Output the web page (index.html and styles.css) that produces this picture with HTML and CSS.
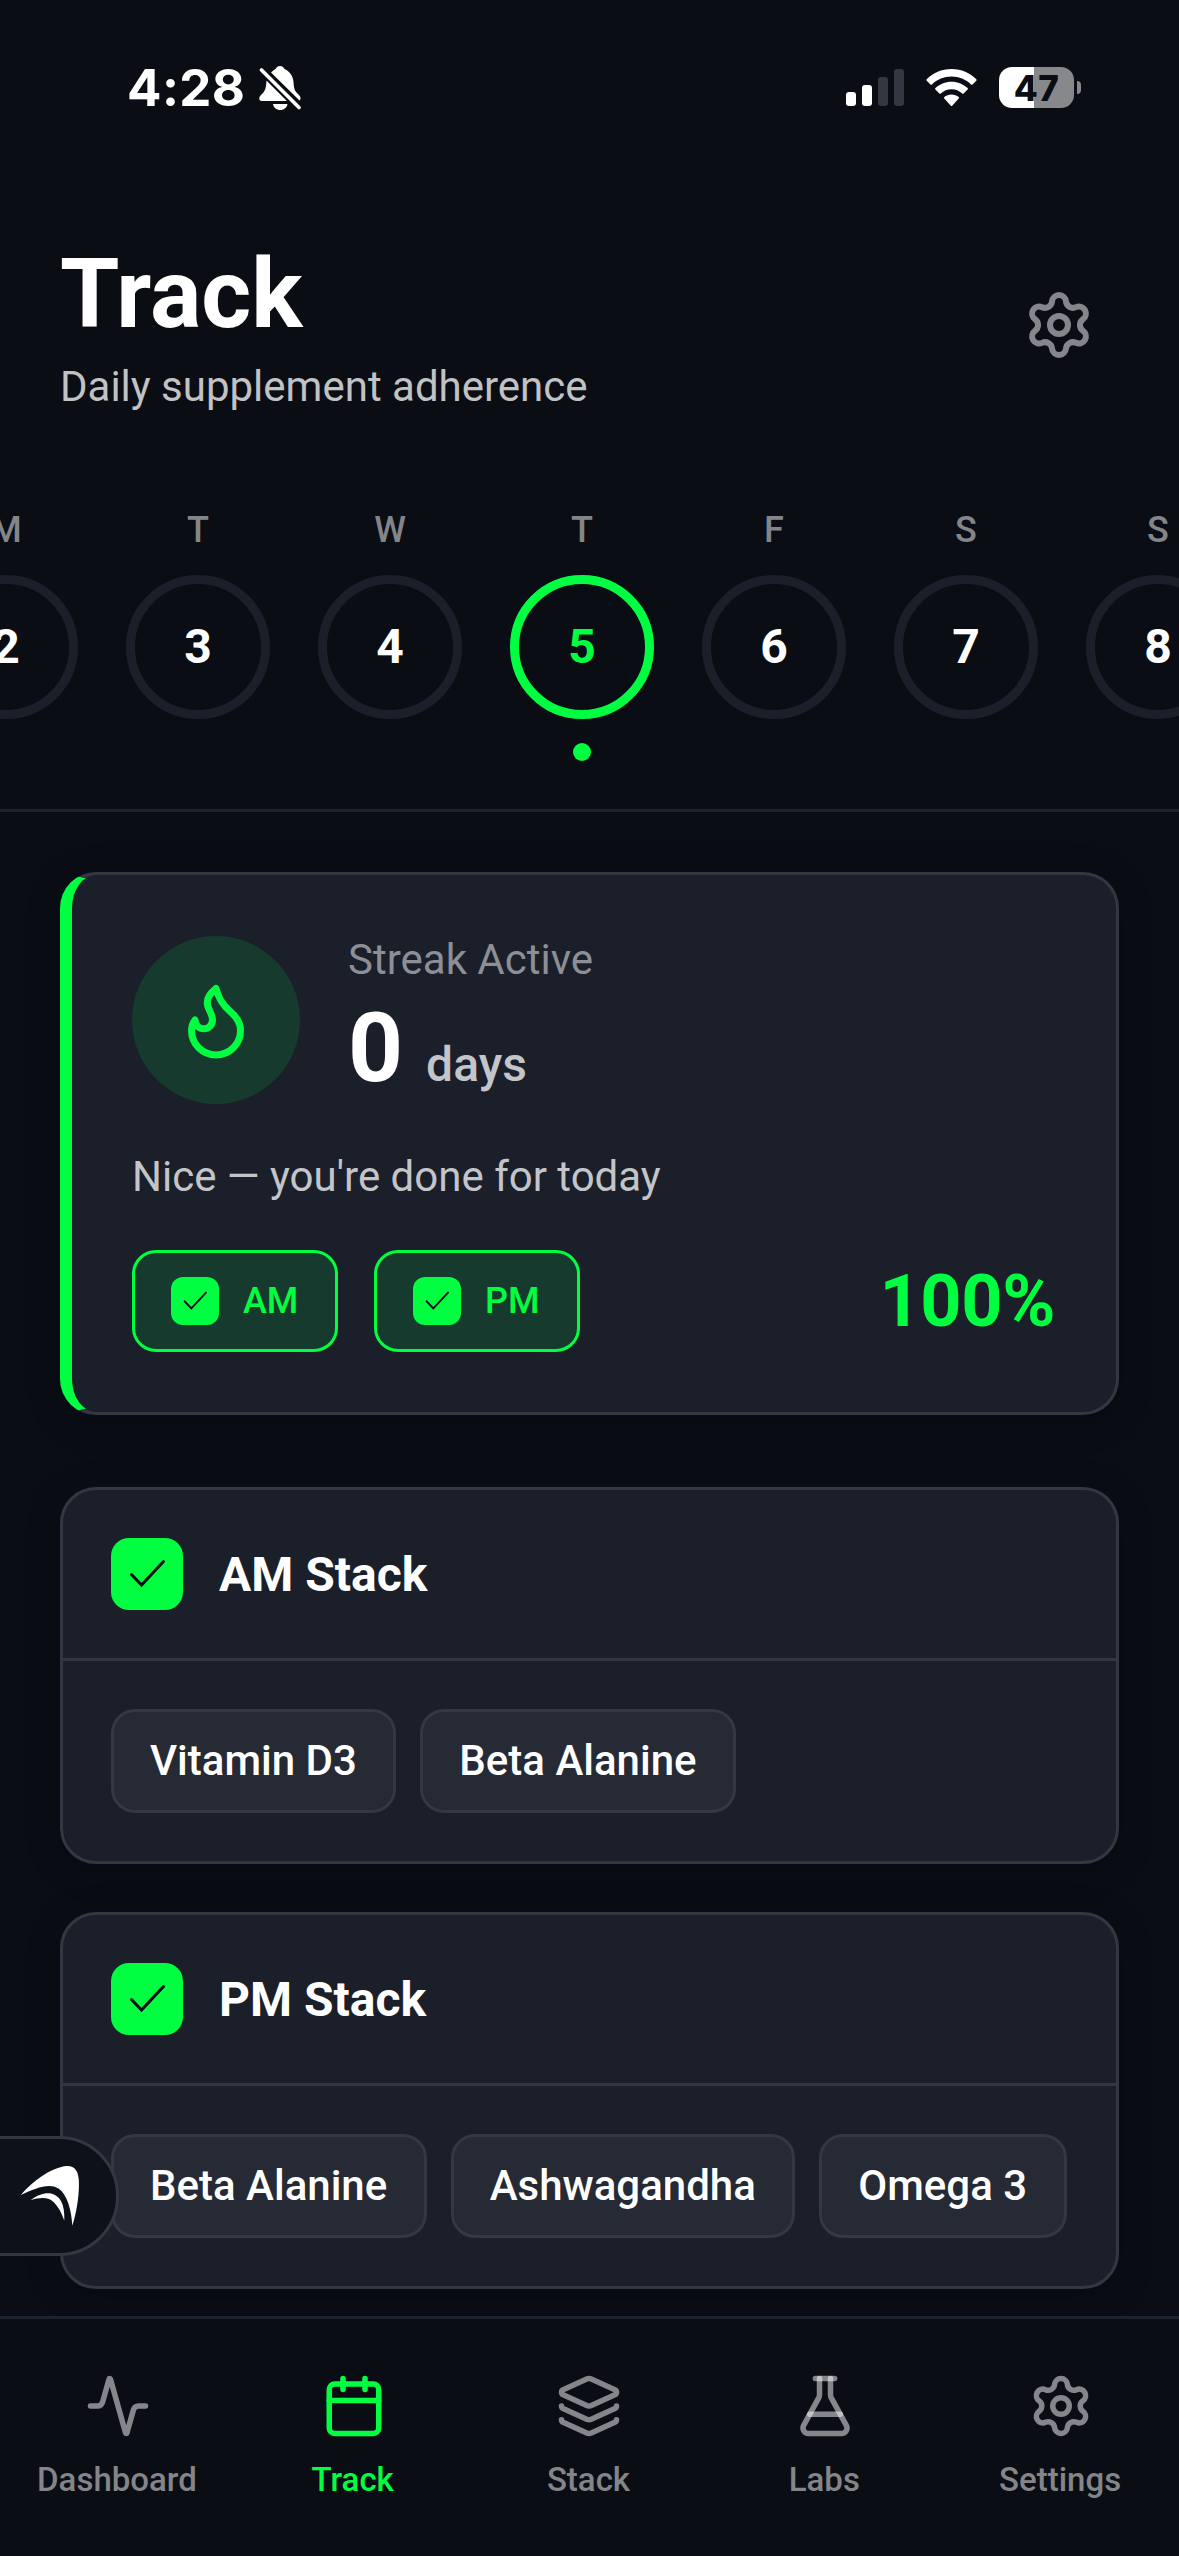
FILE: index.html
```html
<!DOCTYPE html>
<html lang="en">
<head>
<meta charset="utf-8">
<title>Track</title>
<link rel="stylesheet" href="styles.css">
</head>
<body>
<svg class="defs" width="0" height="0">
  <symbol id="gear" viewBox="0 0 24 24">
    <path d="M9.671 4.136a2.34 2.34 0 0 1 4.659 0 2.34 2.34 0 0 0 3.319 1.915 2.34 2.34 0 0 1 2.33 4.033 2.34 2.34 0 0 0 0 3.831 2.34 2.34 0 0 1-2.33 4.033 2.34 2.34 0 0 0-3.319 1.915 2.34 2.34 0 0 1-4.659 0 2.34 2.34 0 0 0-3.32-1.915 2.34 2.34 0 0 1-2.33-4.033 2.34 2.34 0 0 0 0-3.831A2.34 2.34 0 0 1 6.35 6.051a2.34 2.34 0 0 0 3.319-1.915"/>
    <circle cx="12" cy="12" r="3"/>
  </symbol>
  <symbol id="check" viewBox="0 0 72 72">
    <path d="M20.500 36.500L30.500 47L52.500 23.500"/>
  </symbol>
</svg>
<div class="screen">
  <div class="status">
    <div class="status-left">
      <span class="time">4:28</span>
      <svg class="bell" viewBox="0 0 42 44">
        <path fill="#fff" d="M12 6.500C14 4.500 15.500 3.500 16.500 3C17.500 1 19 0 21 0S24.500 1 25.500 3C31 5.500 34 10 34.500 16C35 23 35.500 25 40 29C42 31 42 33.500 40.500 34.500Z"/>
        <path fill="#fff" d="M7.500 14.500L28 35H2.500C0 35 -0.500 31.500 1.500 29.500C6 25.500 7 23 7.500 14.500Z"/>
        <path fill="#fff" d="M14 38H28.500C28 41.500 25 44 21.200 44S14.500 41.500 14 38Z"/>
        <path stroke="#0a0d14" stroke-width="8" d="M4 5L44 45"/>
        <path stroke="#fff" stroke-width="3.600" stroke-linecap="round" d="M2.500 4L40 41.500"/>
      </svg>
    </div>
    <div class="status-right">
      <div class="signal"><i class="bar b1"></i><i class="bar b2"></i><i class="bar b3 dim"></i><i class="bar b4 dim"></i></div>
      <svg class="wifi" viewBox="0 0 51 38">
        <path fill="#fff" d="M25.500 0C35.500 0 44 4 50.300 10.200Q51 11 50.300 11.700L46.500 15.500Q45.800 16 45 15.400C39.800 10.300 33 7.500 25.500 7.500S11.200 10.300 6 15.400Q5.200 16 4.500 15.500L0.700 11.700Q0 11 0.700 10.200C7 4 15.500 0 25.500 0Z"/>
        <path fill="#fff" d="M25.500 12.700C31.800 12.700 37.500 15.200 41.600 19.100Q42.300 19.900 41.600 20.600L37.600 24.500Q36.900 25 36.200 24.400C33.300 21.800 29.600 20.200 25.500 20.200S17.700 21.800 14.800 24.400Q14.100 25 13.400 24.500L9.400 20.600Q8.700 19.900 9.400 19.100C13.500 15.200 19.200 12.700 25.500 12.700Z"/>
        <path fill="#fff" d="M25.500 25.500C28.300 25.500 30.800 26.500 32.700 28.100Q33.400 28.800 32.700 29.600L26.200 36.700Q25.500 37.400 24.800 36.700L18.300 29.600Q17.600 28.800 18.300 28.100C20.200 26.500 22.700 25.500 25.500 25.500Z"/>
      </svg>
      <div class="battery"><span class="cell">47</span><i class="nub"></i></div>
    </div>
  </div>

  <header class="header">
    <div class="heading">
      <h1 class="title">Track</h1>
      <p class="subtitle">Daily supplement adherence</p>
    </div>
    <svg class="icon header-gear"><use href="#gear"/></svg>
  </header>

  <div class="week">
    <div class="day"><span class="dow">M</span><span class="date">2</span></div>
    <div class="day"><span class="dow">T</span><span class="date">3</span></div>
    <div class="day"><span class="dow">W</span><span class="date">4</span></div>
    <div class="day active"><span class="dow">T</span><span class="date">5</span><i class="dot"></i></div>
    <div class="day"><span class="dow">F</span><span class="date">6</span></div>
    <div class="day"><span class="dow">S</span><span class="date">7</span></div>
    <div class="day"><span class="dow">S</span><span class="date">8</span></div>
  </div>

  <main class="content">
    <section class="card streak">
      <div class="streak-top">
        <div class="flame">
          <svg class="icon flame-icon" viewBox="0 0 24 24"><path d="M12 3q1 4 4 6.500t3 5.500a1 1 0 0 1-14 0 5 5 0 0 1 1-3 1 1 0 0 0 5 0c0-2-1.500-3-1.500-5q0-2 2.500-4"/></svg>
        </div>
        <div class="streak-text">
          <div class="streak-label">Streak Active</div>
          <div class="streak-value"><span class="count">0</span><span class="unit">days</span></div>
        </div>
      </div>
      <p class="message">Nice — you're done for today</p>
      <div class="streak-bottom">
        <div class="pill"><span class="box small"><svg class="tick"><use href="#check"/></svg></span>AM</div>
        <div class="pill"><span class="box small"><svg class="tick"><use href="#check"/></svg></span>PM</div>
        <span class="percent">100%</span>
      </div>
    </section>

    <section class="card stack">
      <div class="stack-head"><span class="box"><svg class="tick"><use href="#check"/></svg></span><h2 class="stack-title">AM Stack</h2></div>
      <div class="chips"><span class="chip">Vitamin D3</span><span class="chip">Beta Alanine</span></div>
    </section>

    <section class="card stack">
      <div class="stack-head"><span class="box"><svg class="tick"><use href="#check"/></svg></span><h2 class="stack-title">PM Stack</h2></div>
      <div class="chips"><span class="chip">Beta Alanine</span><span class="chip">Ashwagandha</span><span class="chip">Omega 3</span></div>
    </section>
  </main>

  <nav class="tabs">
    <a class="tab"><svg class="icon tab-icon" viewBox="0 0 24 24"><path d="M22 12h-2.480a2 2 0 0 0-1.930 1.460l-2.350 8.360a.25.25 0 0 1-.48 0L9.240 2.180a.25.25 0 0 0-.48 0l-2.350 8.360A2 2 0 0 1 4.490 12H2"/></svg><span class="tab-label">Dashboard</span></a>
    <a class="tab on"><svg class="icon tab-icon" viewBox="0 0 24 24"><path d="M8 2v4"/><path d="M16 2v4"/><rect width="18" height="18" x="3" y="4" rx="2"/><path d="M3 10h18"/></svg><span class="tab-label">Track</span></a>
    <a class="tab"><svg class="icon tab-icon" viewBox="0 0 24 24"><path d="M12.830 2.180a2 2 0 0 0-1.660 0L2.600 6.080a1 1 0 0 0 0 1.830l8.580 3.910a2 2 0 0 0 1.660 0l8.580-3.900a1 1 0 0 0 0-1.830z"/><path d="M2 12a1 1 0 0 0 .58.91l8.600 3.910a2 2 0 0 0 1.650 0l8.580-3.900A1 1 0 0 0 22 12"/><path d="M2 17a1 1 0 0 0 .58.91l8.600 3.910a2 2 0 0 0 1.650 0l8.580-3.900A1 1 0 0 0 22 17"/></svg><span class="tab-label">Stack</span></a>
    <a class="tab"><svg class="icon tab-icon" viewBox="0 0 24 24"><path d="M14 2v6a2 2 0 0 0 .245.96l5.510 10.080A2 2 0 0 1 18 22H6a2 2 0 0 1-1.755-2.960l5.510-10.080A2 2 0 0 0 10 8V2"/><path d="M6.453 15h11.094"/><path d="M8.500 2h7"/></svg><span class="tab-label">Labs</span></a>
    <a class="tab"><svg class="icon tab-icon"><use href="#gear"/></svg><span class="tab-label">Settings</span></a>
  </nav>

  <div class="floater">
    <svg class="arrow" viewBox="20 2165 60 62" fill="#fff">
      <path d="M20.700 2195C34 2180 50 2169 64 2166.300C74 2164.500 78.500 2170 78.900 2181C79.300 2196 76.500 2213 72.300 2225.700C71.500 2210 67 2194 58.500 2188.500C49 2182.500 36 2188 20.700 2195Z"/>
      <path d="M30.600 2200C38 2194.500 44.500 2192.600 50 2193.300C60 2195 65 2204 64.300 2220.500C60.500 2210 55.500 2202 49.500 2199.300C44 2197.200 38 2198 30.600 2200Z"/>
    </svg>
  </div>
</div>
</body>
</html>
```
FILE: styles.css
```css
* { box-sizing: border-box; margin: 0; padding: 0; }

body {
  background: #0a0d14;
  font-family: Roboto, "Liberation Sans", sans-serif;
  color: #fff;
}

.defs { display: block; width: 0; height: 0; }

.screen {
  position: relative;
  display: flex;
  flex-direction: column;
  width: 1179px;
  height: 2556px;
  overflow: hidden;
}

.icon {
  display: block;
  flex: none;
  fill: none;
  stroke: rgba(255, 255, 255, 0.5);
  stroke-width: 2;
  stroke-linecap: round;
  stroke-linejoin: round;
}

/* status bar */
.status {
  display: flex;
  flex: none;
  justify-content: space-between;
  height: 233px;
  padding: 66px 98px 0 127px;
}
.status-left { display: flex; gap: 12px; align-items: flex-start; }
.time {
  width: 120px;
  font: 750 51px/44px Inter, sans-serif;
  letter-spacing: 0.4px;
  white-space: nowrap;
}
.bell { width: 42px; height: 44px; }
.status-right { display: flex; align-items: flex-start; }
.signal { display: flex; gap: 6px; align-items: flex-end; height: 40px; margin-right: 22px; }
.bar { width: 10px; border-radius: 3px; background: #fff; }
.b1 { height: 14px; }
.b2 { height: 21px; }
.b3 { height: 29px; }
.b4 { height: 37px; }
.dim { background: #343741; }
.wifi { width: 51px; height: 38px; margin: 3px 22px 0 0; }
.battery { display: flex; align-items: center; gap: 3px; margin-top: 1px; }
.cell {
  width: 75px;
  height: 41px;
  border-radius: 13px;
  background: linear-gradient(90deg, #fff 35px, #87888c 35px);
  color: #0a0d14;
  font: 800 35px/42px Inter, sans-serif;
  letter-spacing: 0.5px;
  text-align: center;
}
.nub { width: 4px; height: 13px; border-radius: 0 4px 4px 0; background: #87888c; }

/* page header */
.header {
  display: flex;
  flex: none;
  justify-content: space-between;
  align-items: center;
  height: 184px;
  padding: 0 84px 0 60px;
}
.title { font-size: 96px; line-height: 122px; font-weight: 700; }
.subtitle { margin-top: 2px; font-size: 42px; line-height: 60px; color: #c1c2c4; }
.header-gear { width: 72px; height: 72px; }

/* week strip */
.week {
  display: flex;
  flex: none;
  gap: 48px;
  height: 395px;
  margin-left: -66px;
  padding-top: 92px;
  border-bottom: 3px solid #1d232d;
}
.day { display: flex; flex: none; flex-direction: column; align-items: center; gap: 24px; width: 144px; }
.dow { font-size: 36px; line-height: 42px; font-weight: 500; color: #848589; }
.date {
  width: 144px;
  height: 144px;
  border: 9px solid #1a1f2a;
  border-radius: 50%;
  font-size: 48px;
  line-height: 126px;
  font-weight: 700;
  text-align: center;
}
.active .date { border-color: #00ff41; color: #00ff41; }
.dot { width: 18px; height: 18px; border-radius: 50%; background: #00ff41; }

/* cards */
.content { flex: 1; min-height: 0; padding: 60px 60px 0; overflow: hidden; }
.card {
  border: 3px solid #333741;
  border-radius: 36px;
  background: #1a1f2a;
  box-shadow: 0 6px 36px rgba(0, 0, 0, 0.2);
}
.streak { height: 543px; padding: 60px; border-left: 12px solid #00ff41; }
.streak-top { display: flex; align-items: center; gap: 48px; height: 170px; }
.flame {
  display: flex;
  align-items: center;
  justify-content: center;
  width: 168px;
  height: 168px;
  border-radius: 50%;
  background: #173a2e;
}
.flame-icon { width: 84px; height: 84px; stroke: #00ff41; }
.streak-label { font-size: 42px; line-height: 50px; color: #8c8f95; }
.streak-value { display: flex; align-items: baseline; gap: 23px; height: 114px; margin-top: 6px; }
.count { font-size: 96px; line-height: 114px; font-weight: 700; }
.unit { font-size: 48px; font-weight: 500; color: #c3c5c9; }
.message { margin: 41px 0 42px; font-size: 42px; line-height: 62px; color: #c3c5c9; }
.streak-bottom { display: flex; align-items: center; gap: 36px; }
.pill {
  display: flex;
  align-items: center;
  gap: 24px;
  min-width: 206px;
  height: 102px;
  padding: 0 36px;
  border: 3px solid #00ff41;
  border-radius: 24px;
  background: #173a2e;
  color: #00ff41;
  font-size: 36px;
  font-weight: 500;
}
.percent { margin-left: auto; margin-right: 1px; font-size: 72px; font-weight: 700; letter-spacing: -0.4px; color: #00ff41; }
.box { display: block; flex: none; width: 72px; height: 72px; border-radius: 18px; background: #00ff41; }
.small { width: 48px; height: 48px; border-radius: 12px; }
.tick {
  display: block;
  width: 100%;
  height: 100%;
  fill: none;
  stroke: #0a0d14;
  stroke-width: 3;
  stroke-linecap: round;
}

.stack { margin-top: 72px; height: 377px; }
.stack + .stack { margin-top: 48px; }
.stack-head {
  display: flex;
  align-items: center;
  gap: 36px;
  height: 171px;
  padding: 0 48px;
  border-bottom: 3px solid #333741;
}
.stack-title { font-size: 48px; font-weight: 700; }
.chips { display: flex; gap: 24px; padding: 48px; }
.chip {
  padding: 24px 36.5px 24px 36px;
  border: 3px solid #343842;
  border-radius: 24px;
  background: #252a34;
  font-size: 42px;
  line-height: 50px;
  font-weight: 500;
  white-space: nowrap;
}

/* bottom tabs */
.tabs {
  display: flex;
  flex: none;
  height: 240px;
  border-top: 3px solid #1d232d;
  background: #0a0d14;
}
.tab {
  display: flex;
  flex: 1;
  flex-direction: column;
  align-items: center;
  gap: 21px;
  padding-top: 54px;
  color: #848589;
  font-size: 33px;
  line-height: 40px;
  font-weight: 500;
}
.tab-label { margin-right: 2px; }
.tab-icon { width: 66px; height: 66px; }
.on { color: #00ff41; }
.on .tab-icon { stroke: #00ff41; }

/* handle docked at the left edge, over the content */
.floater {
  position: absolute;
  left: -3px;
  top: 2136px;
  width: 122px;
  height: 120px;
  padding: 26px 0 0 20px;
  border: 3px solid #343741;
  border-radius: 0 60px 60px 0;
  background: #0d111a;
}
.arrow { display: block; width: 60px; height: 62px; }
```
